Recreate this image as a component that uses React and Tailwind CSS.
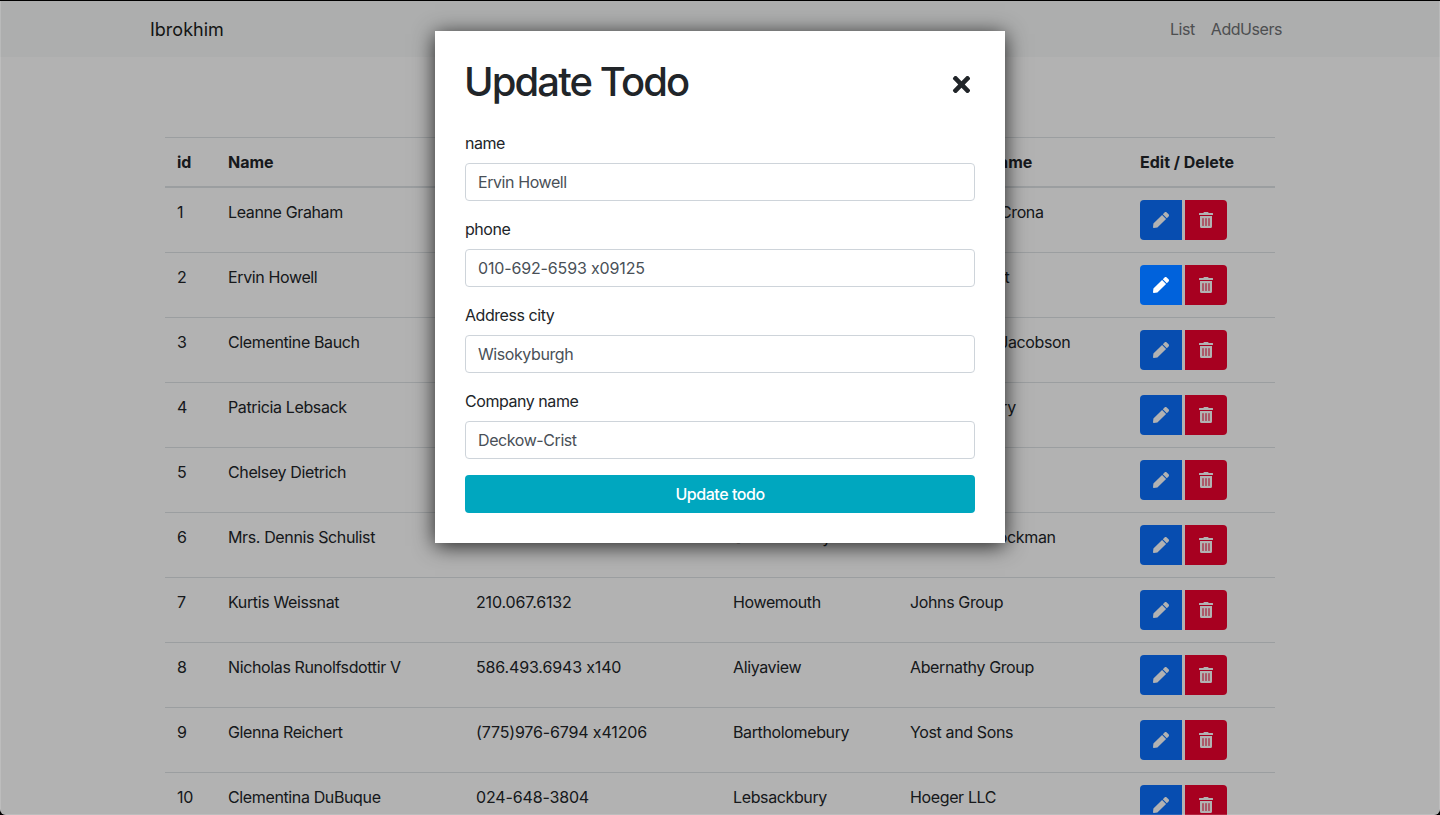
import React from "react";
import { FaPen, FaTrashAlt, FaTimes } from "react-icons/fa";

const rows = [
  ["1", "Leanne Graham", "1-770-736-8031 x56442", "Gwenborough", "Romaguera-Crona"],
  ["2", "Ervin Howell", "010-692-6593 x09125", "Wisokyburgh", "Deckow-Crist"],
  ["3", "Clementine Bauch", "1-463-123-4447", "McKenziehaven", "Romaguera-Jacobson"],
  ["4", "Patricia Lebsack", "493-170-9623 x156", "South Elvis", "Robel-Corkery"],
  ["5", "Chelsey Dietrich", "(254)954-1289", "Roscoeview", "Keebler LLC"],
  ["6", "Mrs. Dennis Schulist", "1-477-935-8478 x6430", "South Christy", "Considine-Lockman"],
  ["7", "Kurtis Weissnat", "210.067.6132", "Howemouth", "Johns Group"],
  ["8", "Nicholas Runolfsdottir V", "586.493.6943 x140", "Aliyaview", "Abernathy Group"],
  ["9", "Glenna Reichert", "(775)976-6794 x41206", "Bartholomebury", "Yost and Sons"],
  ["10", "Clementina DuBuque", "024-648-3804", "Lebsackbury", "Hoeger LLC"],
];

const fields = [
  ["name", "Ervin Howell", "tracking-[-0.42px]"],
  ["phone", "010-692-6593 x09125", "tracking-[-0.15px]"],
  ["Address city", "Wisokyburgh", "tracking-[-0.42px]"],
  ["Company name", "Deckow-Crist", "tracking-[-0.42px]"],
];

export default function App() {
  return (
    <div className="h-[815px] bg-black pt-px">
      <div className="relative h-[814px] overflow-hidden rounded-b-[6px] bg-white text-[#212529] text-base tracking-[-0.37px] [font-feature-settings:'calt'_0] font-['Inter','Liberation_Sans',sans-serif]">
        <nav className="bg-[#f8f9fa] h-[56px]">
          <div className="w-[1140px] mx-auto flex items-center justify-between h-full">
            <span className="text-[18px] tracking-normal text-[#1c1e20]">Ibrokhim</span>
            <div className="flex gap-[16px] pr-[8px] text-[#6f7173] tracking-[-0.45px]">
              <span>List</span>
              <span>AddUsers</span>
            </div>
          </div>
        </nav>
        <div className="w-[1110px] mx-auto mt-[80px]">
          <table className="w-full table-fixed border-collapse">
            <thead>
              <tr className="border-t border-[#dee2e6] border-b-2 border-b-[#dee2e6]">
                <th className="w-[51px] p-3 text-left font-bold tracking-normal">id</th>
                <th className="w-[248px] p-3 text-left font-bold tracking-normal">Name</th>
                <th className="w-[257px] p-3 text-left font-bold tracking-normal">Phone</th>
                <th className="w-[177px] p-3 text-left font-bold tracking-normal">City</th>
                <th className="w-[230px] p-3 text-left font-bold tracking-normal">Company name</th>
                <th className="p-3 text-left font-bold tracking-normal">Edit / Delete</th>
              </tr>
            </thead>
            <tbody>
              {rows.map((r, i) => (
                <tr key={r[0]} className="border-b border-[#dee2e6] align-top">
                  {r.map((c, j) => (
                    <td key={j} className={j === 2 ? "p-3 tracking-[-0.15px]" : "p-3"}>{c}</td>
                  ))}
                  <td className="p-3">
                    <div className="flex gap-[3px] h-[40px]">
                      <button className={i === 1
                        ? "relative z-20 w-[42px] h-[40px] rounded-l-[4px] bg-[#0062dc] text-white flex items-center justify-center"
                        : "w-[42px] h-[40px] rounded-l-[4px] bg-[#0b6ffd] text-white flex items-center justify-center"}>
                        <FaPen size={16} />
                      </button>
                      <button className="w-[42px] h-[40px] rounded-r-[4px] bg-[#f0002e] text-white flex items-center justify-center">
                        <FaTrashAlt size={16} />
                      </button>
                    </div>
                  </td>
                </tr>
              ))}
            </tbody>
          </table>
        </div>

        <div className="absolute inset-0 z-10 bg-black/30 border-x border-b border-white/15" />

        <div className="absolute z-30 left-[435px] top-[30px] w-[570px] bg-white p-[30px] shadow-[0_3px_20px_rgba(0,0,0,0.8)]">
          <div className="flex items-start justify-between h-[48px] mb-[22px]">
            <h1 className="text-[40px] leading-[48px] -mt-[3px] -ml-px font-medium tracking-[-1.9px] text-[#212529]">Update Todo</h1>
            <FaTimes size={25} className="text-[#212529] mt-[11px] mr-[1px]" />
          </div>
          <form className="flex flex-col gap-[16px] tracking-[-0.45px]">
            {fields.map(([label, value, track]) => (
              <div key={label}>
                <label className="block mb-[8px] leading-[24px]">{label}</label>
                <input
                  readOnly
                  value={value}
                  className={`block w-full h-[38px] px-[12px] rounded-[4px] border border-[#ced4da] text-[#495057] bg-white outline-none ${track}`}
                />
              </div>
            ))}
            <button type="button" className="h-[38px] rounded-[4px] bg-[#00a7bf] text-white font-medium">Update todo</button>
          </form>
        </div>
      </div>
    </div>
  );
}
